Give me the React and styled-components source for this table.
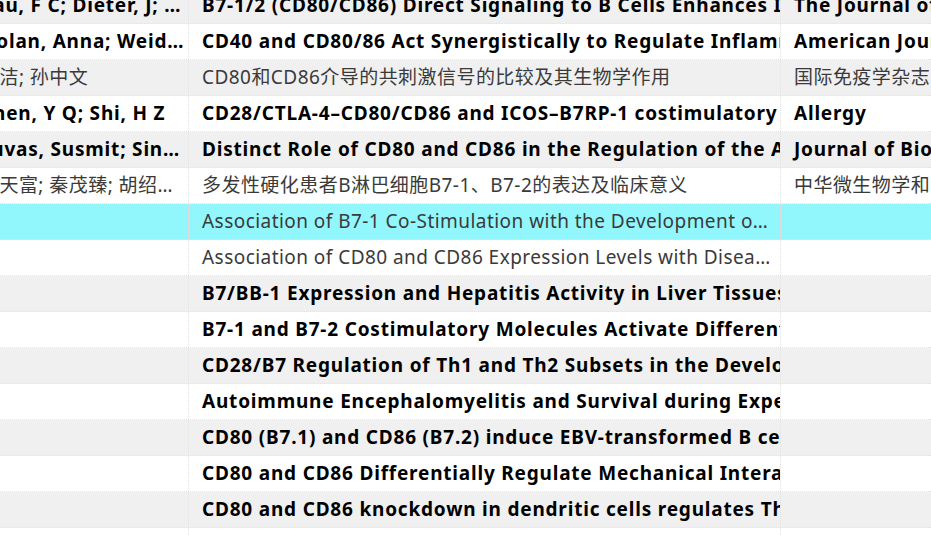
import React, { useLayoutEffect, useRef } from "react";
import styled, { createGlobalStyle } from "styled-components";

const GlobalStyle = createGlobalStyle`
  html, body {
    margin: 0;
    padding: 0;
    background: #ffffff;
  }
  body {
    font-family: "Noto Sans", "Noto Sans CJK SC", sans-serif;
  }
`;

const papers = [
  {
    author: "Rau, F C; Dieter, J; Luo, Z; Priest, S O; Baumgarth, N",
    title: "B7-1/2 (CD80/CD86) Direct Signaling to B Cells Enhances IgG Secretion",
    journal: "The Journal of Immunology",
    unread: true,
  },
  {
    author: "Nolan, Anna; Weiden, Michael D; Kelly, Ann",
    title: "CD40 and CD80/86 Act Synergistically to Regulate Inflammation and Mortality in Polymicrobial Sepsis",
    journal: "American Journal of Respiratory and Critical Care Medicine",
    unread: true,
  },
  {
    author: "王洁; 孙中文",
    title: "CD80和CD86介导的共刺激信号的比较及其生物学作用",
    journal: "国际免疫学杂志",
    unread: false,
  },
  {
    author: "Chen, Y Q; Shi, H Z",
    title: "CD28/CTLA-4–CD80/CD86 and ICOS–B7RP-1 costimulatory pathway in bronchial asthma",
    journal: "Allergy",
    unread: true,
  },
  {
    author: "Suvas, Susmit; Singh, Vijay; Sahdev, Sudhir",
    title: "Distinct Role of CD80 and CD86 in the Regulation of the Activation of B Cell and B Cell Lymphoma",
    journal: "Journal of Biological Chemistry",
    unread: true,
  },
  {
    author: "张天富; 秦茂臻; 胡绍先; 王红",
    title: "多发性硬化患者B淋巴细胞B7-1、B7-2的表达及临床意义",
    journal: "中华微生物学和免疫学杂志",
    unread: false,
  },
  {
    author: "",
    title: "Association of B7-1 Co-Stimulation with the Development of Graft Arterial Disease",
    journal: "",
    unread: false,
    selected: true,
  },
  {
    author: "",
    title: "Association of CD80 and CD86 Expression Levels with Disease Activity",
    journal: "",
    unread: false,
  },
  {
    author: "",
    title: "B7/BB-1 Expression and Hepatitis Activity in Liver Tissues of Patients",
    journal: "",
    unread: true,
  },
  {
    author: "",
    title: "B7-1 and B7-2 Costimulatory Molecules Activate Differentially the Th1/Th2 Pathways",
    journal: "",
    unread: true,
  },
  {
    author: "",
    title: "CD28/B7 Regulation of Th1 and Th2 Subsets in the Development of Autoimmune Diabetes",
    journal: "",
    unread: true,
  },
  {
    author: "",
    title: "Autoimmune Encephalomyelitis and Survival during Experimental Infection",
    journal: "",
    unread: true,
  },
  {
    author: "",
    title: "CD80 (B7.1) and CD86 (B7.2) induce EBV-transformed B cell apoptosis",
    journal: "",
    unread: true,
  },
  {
    author: "",
    title: "CD80 and CD86 Differentially Regulate Mechanical Interactions of T-Cells",
    journal: "",
    unread: true,
  },
  {
    author: "",
    title: "CD80 and CD86 knockdown in dendritic cells regulates Th1/Th2 cytokine balance",
    journal: "",
    unread: true,
  },
  {
    author: "",
    title: "CD80 and CD86 Costimulatory Molecules Differentially Regulate",
    journal: "",
    unread: true,
  },
];

function PaperList() {
  const viewRef = useRef(null);

  // the list is scrolled a little, as in the original window
  useLayoutEffect(() => {
    if (viewRef.current) {
      viewRef.current.scrollLeft = 26;
      viewRef.current.scrollTop = 12;
    }
  }, []);

  return (
    <Viewport ref={viewRef}>
      <Table>
        {papers.map((p, i) => (
          <Row key={i} $striped={i % 2 === 0} $selected={p.selected}>
            <AuthorCell $bold={p.unread}>{p.author}</AuthorCell>
            <TitleCell $bold={p.unread}>{p.title}</TitleCell>
            <JournalCell $bold={p.unread}>{p.journal}</JournalCell>
          </Row>
        ))}
      </Table>
    </Viewport>
  );
}

export default function App() {
  return (
    <>
      <GlobalStyle />
      <PaperList />
    </>
  );
}

const Viewport = styled.div`
  width: 931px;
  height: 535px;
  overflow: hidden;
  background: #ffffff;
`;

const Table = styled.div`
  display: flex;
  flex-direction: column;
  width: max-content;
`;

const Row = styled.div`
  display: grid;
  grid-template-columns: 215px 592px 420px;
  height: 36px;
  box-sizing: border-box;
  border-bottom: 1px dotted #e4e4e4;
  background: ${({ $selected, $striped }) =>
    $selected ? "#91f7fc" : $striped ? "#f0f0f0" : "#ffffff"};
`;

const Cell = styled.div`
  min-width: 0;
  box-sizing: border-box;
  border-right: 1px dotted #e2e2e2;
  font-size: 19px;
  line-height: 35px;
  white-space: nowrap;
  overflow: hidden;
  color: ${({ $bold }) => ($bold ? "#000000" : "#3a3a3a")};
  font-weight: ${({ $bold }) => ($bold ? 700 : 400)};
  letter-spacing: ${({ $bold }) => ($bold ? "0.8px" : "0.45px")};
`;

const AuthorCell = styled(Cell)`
  padding: 0 3px 0 6px;
  text-overflow: ellipsis;
`;

const TitleCell = styled(Cell)`
  padding: 0 8px 0 13px;
  text-overflow: ${({ $bold }) => ($bold ? "clip" : "ellipsis")};
`;

const JournalCell = styled(Cell)`
  padding: 0 8px 0 13px;
  border-right: none;
  text-overflow: clip;
`;
